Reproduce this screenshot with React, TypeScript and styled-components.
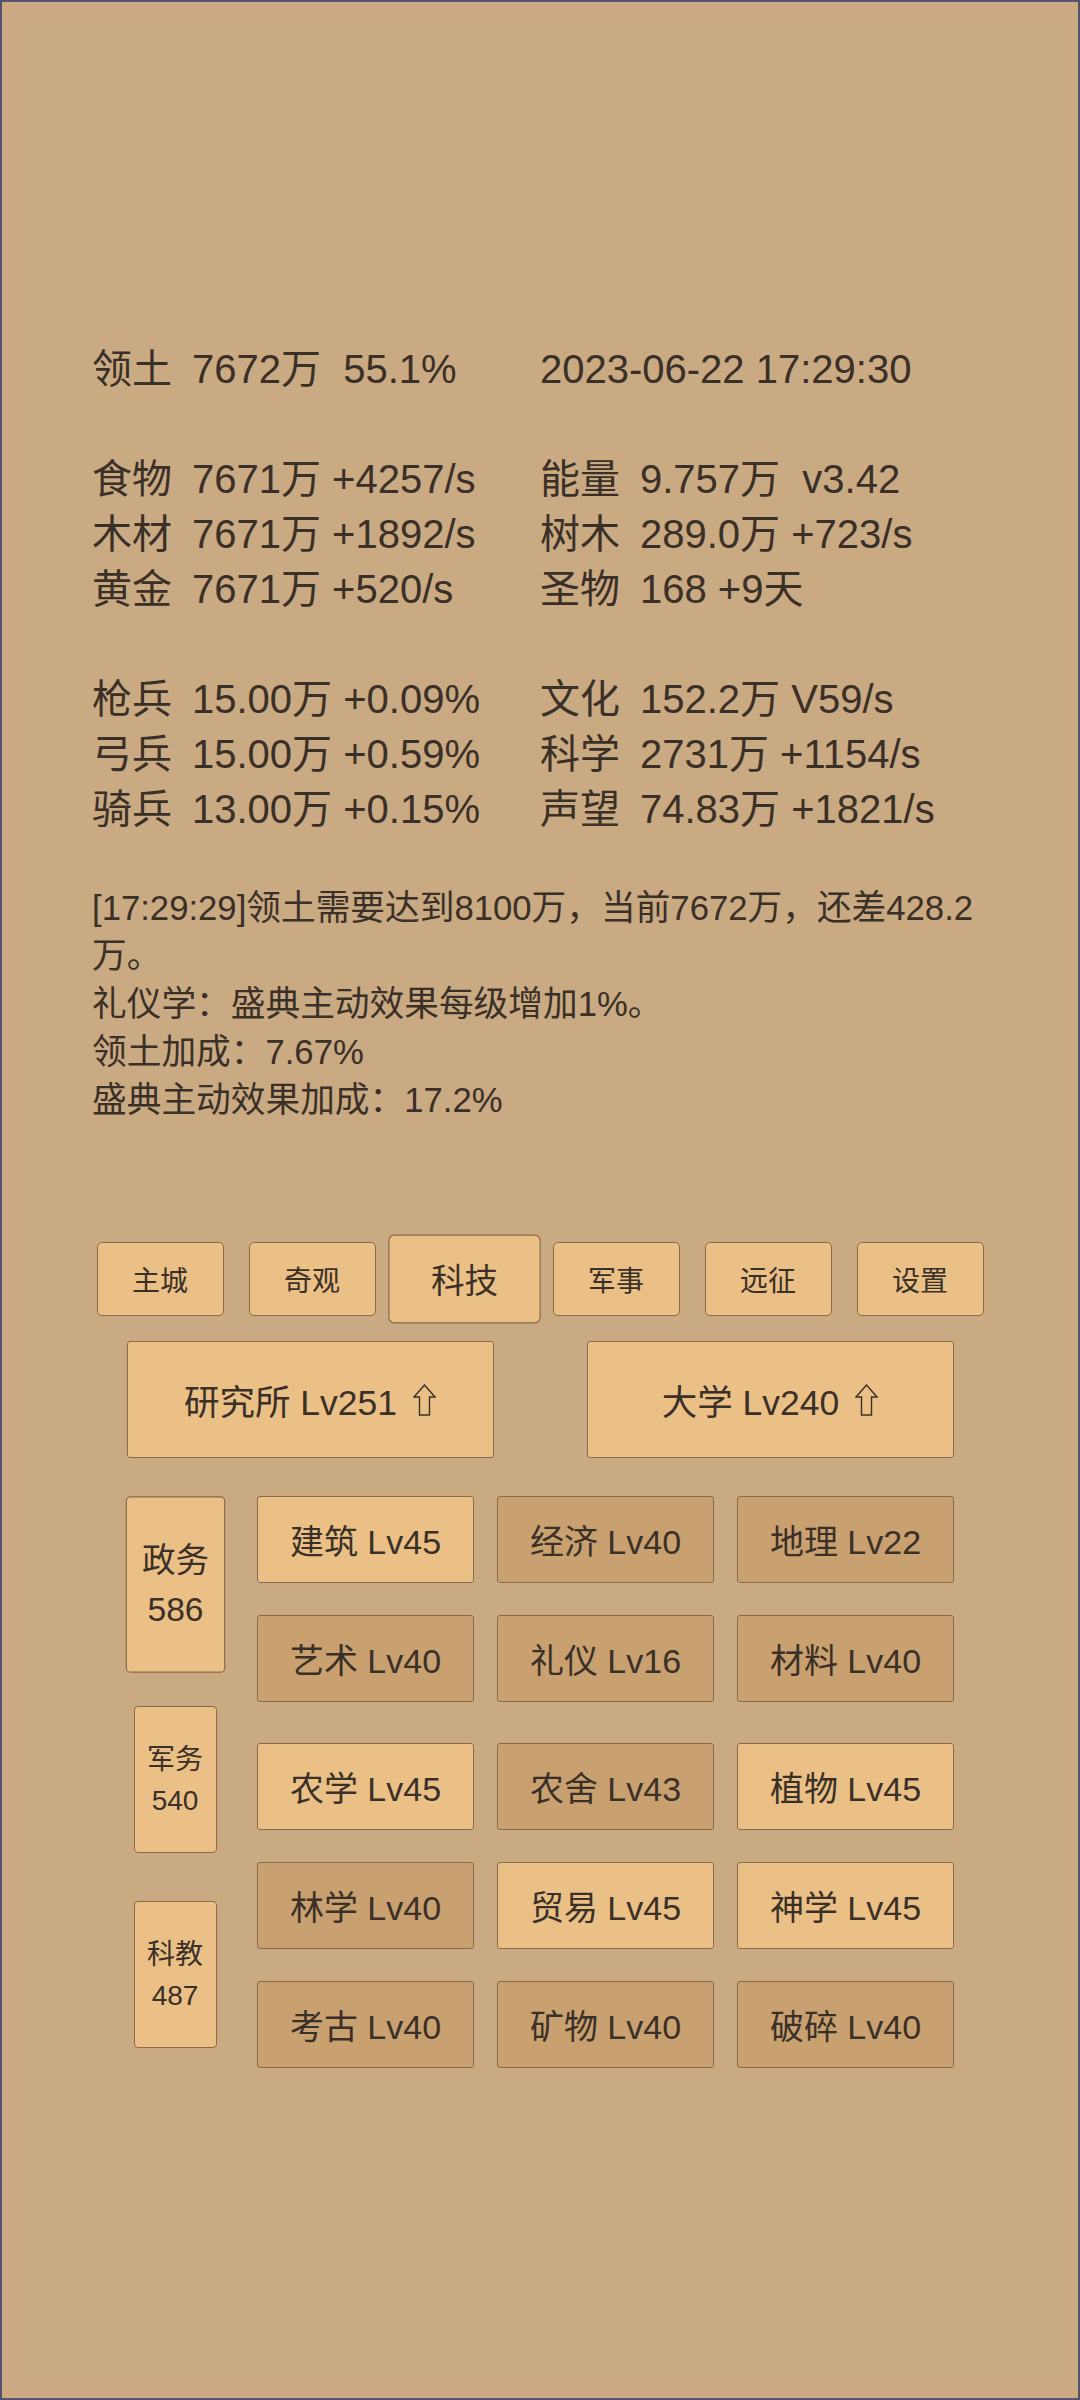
import React from "react"
import styled, { createGlobalStyle } from "styled-components"

const GlobalStyle = createGlobalStyle`
    html, body {
        margin: 0;
        padding: 0;
    }
    * {
        box-sizing: border-box;
    }
`

const Page = styled.div`
    width: 1080px;
    height: 2400px;
    border: 2px solid #55516b;
    background-color: #c9aa82;
    color: #3a3028;
    font-family: "Liberation Sans", "Noto Sans CJK SC", sans-serif;
    padding: 340px 90px 0 90px;
`

const Stats = styled.section`
    display: flex;
    flex-direction: column;
    gap: 55px;
    font-size: 40px;
    line-height: 55px;
`

const StatGroup = styled.div`
    display: grid;
    grid-template-columns: 448px 1fr;
`

const StatLine = styled.div`
    display: flex;
    white-space: pre;
`

const Label = styled.span`
    width: 100px;
    flex-shrink: 0;
`

const Message = styled.div`
    margin-top: 47px;
    font-size: 34.7px;
    line-height: 48px;
`

const Tabs = styled.nav`
    display: flex;
    justify-content: center;
    gap: 25px;
    margin-top: 118px;
`

const Tab = styled.div<{ $active?: boolean }>`
    width: 127px;
    height: 74px;
    display: flex;
    align-items: center;
    justify-content: center;
    background-color: #ebc086;
    border: 1px solid #8a6a48;
    border-radius: 5px;
    font-size: 28px;
    transform: ${(p) => (p.$active ? "scale(1.2)" : "none")};
`

const Buildings = styled.div`
    display: flex;
    justify-content: center;
    gap: 93px;
    margin-top: 25px;
`

const BuildingButton = styled.div`
    width: 367px;
    height: 117px;
    display: flex;
    align-items: center;
    justify-content: center;
    background-color: #ebc086;
    border: 1px solid #8a6a48;
    border-radius: 3px;
    font-size: 35.5px;
    white-space: pre;
`

const ArrowIcon = styled.svg`
    width: 23px;
    height: 32px;
    margin-left: 16px;
    flex-shrink: 0;
`

const TechArea = styled.div`
    width: 828px;
    margin: 38px auto 0 auto;
    display: flex;
    gap: 33px;
`

const Categories = styled.div`
    width: 98px;
    display: flex;
    flex-direction: column;
    align-items: center;
    gap: 48px;
    padding-top: 15px;
`

const Category = styled.div<{ $active?: boolean }>`
    width: 83px;
    height: 147px;
    display: flex;
    flex-direction: column;
    align-items: center;
    justify-content: center;
    background-color: #ebc086;
    border: 1px solid #8a6a48;
    border-radius: 4px;
    font-size: 28px;
    line-height: 41px;
    transform: ${(p) => (p.$active ? "scale(1.2)" : "none")};
`

const TechColumn = styled.div`
    display: flex;
    flex-direction: column;
    gap: 41px;
`

const TechGroup = styled.div`
    display: grid;
    grid-template-columns: repeat(3, 217px);
    column-gap: 23px;
    row-gap: 32px;
`

const TechButton = styled.div<{ $on?: boolean }>`
    height: 87px;
    display: flex;
    align-items: center;
    justify-content: center;
    background-color: ${(p) => (p.$on ? "#ebc086" : "#c9a06f")};
    border: 1px solid #8a6a48;
    border-radius: 3px;
    font-size: 34px;
    white-space: pre;
`

const leftStats = [
    ["食物", "7671万 +4257/s"],
    ["木材", "7671万 +1892/s"],
    ["黄金", "7671万 +520/s"],
]
const rightStats = [
    ["能量", "9.757万  v3.42"],
    ["树木", "289.0万 +723/s"],
    ["圣物", "168 +9天"],
]
const leftArmy = [
    ["枪兵", "15.00万 +0.09%"],
    ["弓兵", "15.00万 +0.59%"],
    ["骑兵", "13.00万 +0.15%"],
]
const rightArmy = [
    ["文化", "152.2万 V59/s"],
    ["科学", "2731万 +1154/s"],
    ["声望", "74.83万 +1821/s"],
]

const tabs = ["主城", "奇观", "科技", "军事", "远征", "设置"]

const techGroups: [string, boolean][][] = [
    [
        ["建筑 Lv45", true],
        ["经济 Lv40", false],
        ["地理 Lv22", false],
        ["艺术 Lv40", false],
        ["礼仪 Lv16", false],
        ["材料 Lv40", false],
    ],
    [
        ["农学 Lv45", true],
        ["农舍 Lv43", false],
        ["植物 Lv45", true],
        ["林学 Lv40", false],
        ["贸易 Lv45", true],
        ["神学 Lv45", true],
        ["考古 Lv40", false],
        ["矿物 Lv40", false],
        ["破碎 Lv40", false],
    ],
]

function UpArrow() {
    return (
        <ArrowIcon viewBox="0 0 23 32">
            <polygon
                points="11.5,1 22,13 16.5,13 16.5,31 6.5,31 6.5,13 1,13"
                fill="none"
                stroke="#3a3028"
                strokeWidth="1.4"
                strokeLinejoin="miter"
            />
        </ArrowIcon>
    )
}

function pairRows(left: string[][], right: string[][]) {
    return left.map((l, i) => (
        <React.Fragment key={l[0]}>
            <StatLine>
                <Label>{l[0]}</Label>
                {l[1]}
            </StatLine>
            <StatLine>
                <Label>{right[i][0]}</Label>
                {right[i][1]}
            </StatLine>
        </React.Fragment>
    ))
}

export default function App() {
    return (
        <Page>
            <GlobalStyle />
            <Stats>
                <StatGroup>
                    <StatLine>
                        <Label>领土</Label>
                        {"7672万  55.1%"}
                    </StatLine>
                    <StatLine>2023-06-22 17:29:30</StatLine>
                </StatGroup>
                <StatGroup>{pairRows(leftStats, rightStats)}</StatGroup>
                <StatGroup>{pairRows(leftArmy, rightArmy)}</StatGroup>
            </Stats>
            <Message>
                <div>[17:29:29]领土需要达到8100万，当前7672万，还差428.2万。</div>
                <div>礼仪学：盛典主动效果每级增加1%。</div>
                <div>领土加成：7.67%</div>
                <div>盛典主动效果加成：17.2%</div>
            </Message>
            <Tabs>
                {tabs.map((t) => (
                    <Tab key={t} $active={t === "科技"}>{t}</Tab>
                ))}
            </Tabs>
            <Buildings>
                <BuildingButton>{"研究所 Lv251"}<UpArrow /></BuildingButton>
                <BuildingButton>{"大学 Lv240"}<UpArrow /></BuildingButton>
            </Buildings>
            <TechArea>
                <Categories>
                    <Category $active><span>政务</span><span>586</span></Category>
                    <Category><span>军务</span><span>540</span></Category>
                    <Category><span>科教</span><span>487</span></Category>
                </Categories>
                <TechColumn>
                    {techGroups.map((group, gi) => (
                        <TechGroup key={gi}>
                            {group.map(([name, on]) => (
                                <TechButton key={name} $on={on}>{name}</TechButton>
                            ))}
                        </TechGroup>
                    ))}
                </TechColumn>
            </TechArea>
        </Page>
    )
}
